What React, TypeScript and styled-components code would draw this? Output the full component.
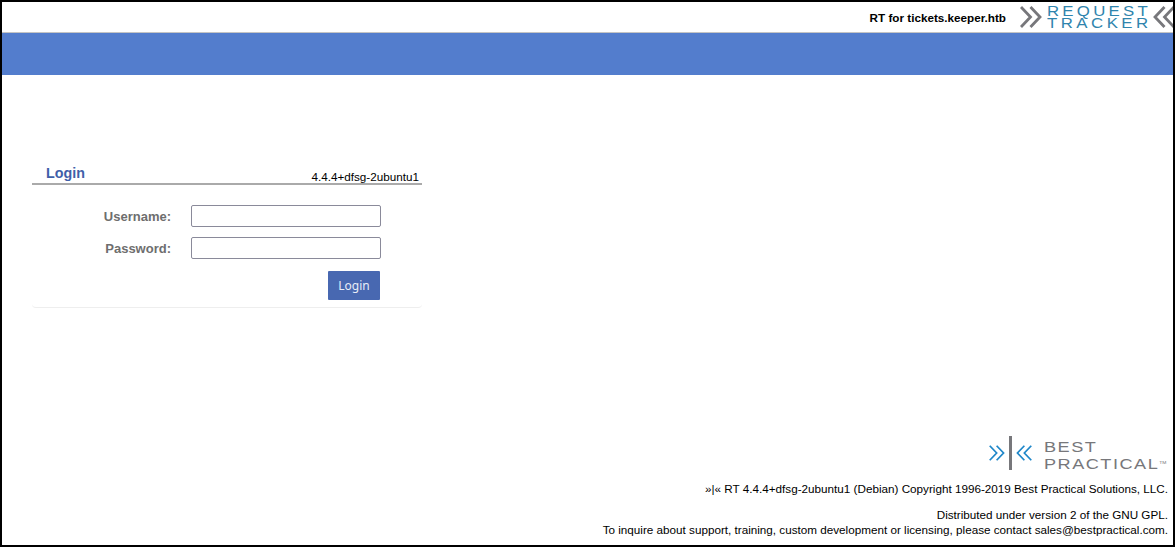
import React from "react";
import { createGlobalStyle, styled } from "styled-components";

const GlobalStyle = createGlobalStyle`
  html, body {
    margin: 0;
    padding: 0;
    background: #fff;
  }
`;

const Frame = styled.div`
  box-sizing: border-box;
  width: 1175px;
  height: 547px;
  border: 2px solid #000;
  display: flex;
  flex-direction: column;
  overflow: hidden;
  font-family: "Liberation Sans", Arial, sans-serif;
  background: #fff;
`;

const TopBar = styled.div`
  display: flex;
  flex-direction: row;
  justify-content: flex-end;
  align-items: center;
  height: 30px;
  border-bottom: 1px solid #c4c4c4;
  flex-shrink: 0;
`;

const SiteName = styled.div`
  font-size: 11.7px;
  font-weight: bold;
  color: #000;
  margin-right: 14px;
  margin-top: 1px;
`;

const RtLogo = styled.div`
  display: flex;
  flex-direction: row;
  align-items: center;
  width: 153px;
  flex-shrink: 0;
`;

const RtWords = styled.div`
  display: flex;
  flex-direction: column;
  width: 106px;
  margin: 0 0 1px 5px;
  color: #2f84ad;
  line-height: 12px;
  font-size: 14px;
  flex-shrink: 0;
`;

const WideWord = styled.span<{ $spacing: number; $stretch: number }>`
  letter-spacing: ${(p) => p.$spacing}px;
  white-space: nowrap;
  transform: scaleX(${(p) => p.$stretch});
  transform-origin: left center;
`;

const BlueBand = styled.div`
  height: 42px;
  background: #537dcd;
  flex-shrink: 0;
`;

const Content = styled.main`
  flex: 1;
  padding: 88px 0 0 30px;
`;

const LoginBox = styled.section`
  box-sizing: border-box;
  width: 390px;
  height: 145px;
  border-bottom: 1px solid #eeeeee;
  border-radius: 0 0 4px 4px;
`;

const BoxHeader = styled.div`
  display: flex;
  flex-direction: row;
  justify-content: space-between;
  align-items: flex-end;
  height: 20px;
  padding: 0 3px 0 14px;
  border-bottom: 2px solid #aaaaaa;
`;

const BoxTitle = styled.h2`
  margin: 0;
  font-size: 14.3px;
  font-weight: bold;
  font-family: "Liberation Sans", Arial, sans-serif;
  color: #3f5fa9;
  line-height: 20px;
`;

const Version = styled.span`
  font-size: 11.7px;
  color: #000;
  line-height: 12px;
`;

const Form = styled.form`
  display: flex;
  flex-direction: column;
  gap: 10px;
  padding-top: 20px;
`;

const Row = styled.div`
  display: flex;
  flex-direction: row;
  align-items: center;
  height: 22px;
`;

const Label = styled.label`
  width: 139px;
  text-align: right;
  font-size: 13px;
  font-weight: bold;
  color: #6e6e6e;
  margin-right: 20px;
`;

const Input = styled.input`
  box-sizing: border-box;
  width: 190px;
  height: 22px;
  border: 1px solid #8a8a9a;
  border-radius: 2px;
  background: #fff;
  padding: 0 4px;
  outline: none;
`;

const ButtonRow = styled.div`
  display: flex;
  flex-direction: row;
  justify-content: flex-end;
  width: 348px;
  margin-top: 2px;
`;

const LoginButton = styled.button`
  box-sizing: border-box;
  width: 52px;
  height: 29px;
  border: none;
  border-radius: 1px;
  background: #4868b1;
  color: #e8edf7;
  font-family: "Noto Sans", sans-serif;
  font-size: 12px;
  padding: 0;
`;

const Footer = styled.footer`
  display: flex;
  flex-direction: column;
  align-items: flex-end;
  padding: 0 5px 8px 0;
  font-size: 11.7px;
  color: #000;
`;

const BpLogo = styled.div`
  display: flex;
  flex-direction: row;
  align-items: center;
  height: 34px;
  margin-bottom: 11px;
`;

const BpBar = styled.div`
  width: 3px;
  height: 34px;
  margin: 0 4px;
  background: #77777b;
`;

const BpWords = styled.div`
  box-sizing: border-box;
  display: flex;
  flex-direction: column;
  height: 34px;
  padding-top: 3px;
  color: #77777b;
  margin-left: 12px;
  line-height: 17px;
  font-size: 14.5px;
  width: 124px;
`;

const Trademark = styled.sup`
  font-size: 4px;
  letter-spacing: 0;
  vertical-align: 5px;
  line-height: 0;
`;

const FooterLine = styled.p<{ $gap?: number }>`
  margin: 0;
  line-height: 15px;
  margin-bottom: ${(p) => p.$gap ?? 0}px;
  white-space: nowrap;
`;

const ChevronPair: React.FC<{ flip?: boolean; width: number; height: number; color: string; stroke: number }> = ({
  flip,
  width,
  height,
  color,
  stroke,
}) => (
  <svg width={width} height={height} viewBox="0 0 22 22" preserveAspectRatio="none" style={{ flexShrink: 0 }}>
    <g
      fill="none"
      stroke={color}
      strokeWidth={stroke}
      transform={flip ? "translate(22 0) scale(-1 1)" : undefined}
    >
      <path d="M1 1 L10.5 11 L1 21" />
      <path d="M10.5 1 L20 11 L10.5 21" />
    </g>
  </svg>
);

export default function App() {
  return (
    <Frame>
      <GlobalStyle />
      <TopBar>
        <SiteName>RT for tickets.keeper.htb</SiteName>
        <RtLogo>
          <ChevronPair width={22} height={22} color="#77777b" stroke={2.8} />
          <RtWords>
            <WideWord $spacing={2.7} $stretch={1.2}>REQUEST</WideWord>
            <WideWord $spacing={2.9} $stretch={1.2}>TRACKER</WideWord>
          </RtWords>
          <ChevronPair flip width={22} height={22} color="#77777b" stroke={2.8} />
        </RtLogo>
      </TopBar>
      <BlueBand />
      <Content>
        <LoginBox>
          <BoxHeader>
            <BoxTitle>Login</BoxTitle>
            <Version>4.4.4+dfsg-2ubuntu1</Version>
          </BoxHeader>
          <Form onSubmit={(e) => e.preventDefault()}>
            <Row>
              <Label>Username:</Label>
              <Input type="text" />
            </Row>
            <Row>
              <Label>Password:</Label>
              <Input type="password" />
            </Row>
            <ButtonRow>
              <LoginButton type="submit">Login</LoginButton>
            </ButtonRow>
          </Form>
        </LoginBox>
      </Content>
      <Footer>
        <BpLogo>
          <ChevronPair width={16} height={16} color="#1f87c9" stroke={2.4} />
          <BpBar />
          <ChevronPair flip width={16} height={16} color="#1f87c9" stroke={2.4} />
          <BpWords>
            <WideWord $spacing={1.2} $stretch={1.25}>BEST</WideWord>
            <WideWord $spacing={1.2} $stretch={1.25}>
              PRACTICAL<Trademark>TM</Trademark>
            </WideWord>
          </BpWords>
        </BpLogo>
        <FooterLine $gap={11}>»|« RT 4.4.4+dfsg-2ubuntu1 (Debian) Copyright 1996-2019 Best Practical Solutions, LLC.</FooterLine>
        <FooterLine>Distributed under version 2 of the GNU GPL.</FooterLine>
        <FooterLine>To inquire about support, training, custom development or licensing, please contact sales@bestpractical.com.</FooterLine>
      </Footer>
    </Frame>
  );
}
